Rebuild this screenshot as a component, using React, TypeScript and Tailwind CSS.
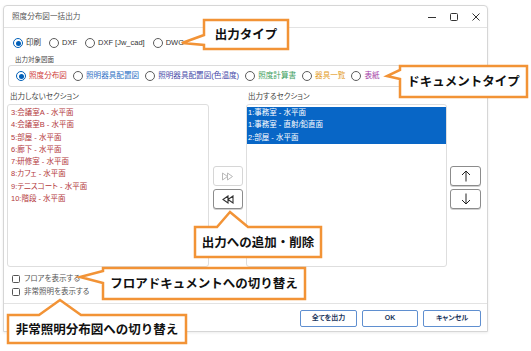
import clsx from "clsx";

type Opt = { label: string; color?: string; checked?: boolean };

const outputTypes: Opt[] = [
    { label: "印刷", checked: true },
    { label: "DXF" },
    { label: "DXF [Jw_cad]" },
    { label: "DWG" },
];

const docTypes: Opt[] = [
    { label: "照度分布図", color: "text-[#cf3b3b]", checked: true },
    { label: "照明器具配置図", color: "text-[#2a6fc4]" },
    { label: "照明器具配置図(色温度)", color: "text-[#4548a8]" },
    { label: "照度計算書", color: "text-[#3c9d5c]" },
    { label: "器具一覧", color: "text-[#e39a22]" },
    { label: "表紙", color: "text-[#a23aa6]" },
];

const notOutput = [
    "3:会議室A - 水平面",
    "4:会議室B - 水平面",
    "5:部屋 - 水平面",
    "6:廊下 - 水平面",
    "7:研修室 - 水平面",
    "8:カフェ - 水平面",
    "9:テニスコート - 水平面",
    "10:階段 - 水平面",
];

const toOutput = ["1:事務室 - 水平面", "1:事務室 - 直射/鉛直面", "2:部屋 - 水平面"];

// callout boxes (text overlay) and their outlines with the tails
const callouts = [
    { text: "出力タイプ", x: 204, y: 20, w: 84, h: 29, d: "M204 20H288V49H204V45L182 43L204 35Z" },
    { text: "ドキュメントタイプ", x: 400, y: 66, w: 127, h: 31, d: "M400 66H527V97H400V79L387 76L400 70Z" },
    { text: "出力への追加・削除", x: 195, y: 227, w: 126, h: 30, d: "M195 227H217L230 212L248 227H321V257H195Z" },
    { text: "フロアドキュメントへの切り替え", x: 103, y: 268, w: 202, h: 31, d: "M103 268H305V299H103V283L80 277L103 271Z" },
    { text: "非常照明分布図への切り替え", x: 8, y: 315, w: 178, h: 28, d: "M8 315H39L60 300L81 315H186V343H8Z" },
];

function Radio({ opt, size }: { opt: Opt; size: string }) {
    return (
        <div className="flex items-center gap-[3px]">
            <span
                className={clsx(
                    "w-[10px] h-[10px] rounded-full flex items-center justify-center bg-white shrink-0",
                    opt.checked ? "border-[1.5px] border-[#005fb8]" : "border border-[#5c5c5c]"
                )}
            >
                {opt.checked && <span className="w-[5px] h-[5px] rounded-full bg-[#005fb8]" />}
            </span>
            <span className={clsx(size, "whitespace-nowrap leading-none", opt.color ?? "text-[#333]")}>
                {opt.label}
            </span>
        </div>
    );
}

function Check({ label }: { label: string }) {
    return (
        <div className="h-[13px] flex items-center gap-[4px] ml-[5px]">
            <span className="w-[8px] h-[8px] rounded-[1.5px] border border-[#555] bg-white" />
            <span className="text-[7.5px] text-[#555] leading-none">{label}</span>
        </div>
    );
}

function SmallButton({ children, disabled }: { children: React.ReactNode; disabled?: boolean }) {
    return (
        <div
            className={clsx(
                "w-[30px] h-[20px] rounded-[3px] bg-white flex items-center justify-center",
                disabled ? "border border-[#d6d6d6]" : "border border-[#8c8c8c] shadow-[0_1px_0_#d0d0d0]"
            )}
        >
            {children}
        </div>
    );
}

function FooterButton({ label, w }: { label: string; w: string }) {
    return (
        <div
            className={clsx(
                w,
                "h-[17px] rounded-[2px] border border-[#5f8fd0] bg-white flex items-center justify-center text-[7px] font-bold text-[#1d3760]"
            )}
        >
            {label}
        </div>
    );
}

export default function App() {
    return (
        <div className="relative w-[531px] h-[351px] overflow-hidden bg-white font-['Liberation_Sans','Noto_Sans_CJK_JP',sans-serif]">
            {/* dialog */}
            <div className="ml-[3px] mt-[5px] w-[485px] h-[327px] border border-[#d6d6d6] rounded-t-[4px] bg-white flex flex-col shadow-[0_1px_3px_rgba(0,0,0,0.08)] [font-feature-settings:'palt']">
                {/* title bar */}
                <div className="h-[22px] border-b border-[#e3e3e3] flex items-center">
                    <span className="pl-[8px] text-[7.6px] text-[#555] flex-1">照度分布図一括出力</span>
                    <div className="w-[22px] h-full flex items-center justify-center">
                        <svg width="10" height="10" viewBox="0 0 10 10">
                            <path d="M1 5.5H9" stroke="#333" strokeWidth="1" />
                        </svg>
                    </div>
                    <div className="w-[22px] h-full flex items-center justify-center">
                        <svg width="10" height="10" viewBox="0 0 10 10">
                            <rect x="1.5" y="1.5" width="7" height="7" rx="1" fill="none" stroke="#333" strokeWidth="1" />
                        </svg>
                    </div>
                    <div className="w-[22px] h-full flex items-center justify-center">
                        <svg width="10" height="10" viewBox="0 0 10 10">
                            <path d="M1.5 1.5L8.5 8.5M8.5 1.5L1.5 8.5" stroke="#333" strokeWidth="1" />
                        </svg>
                    </div>
                </div>

                {/* body */}
                <div className="flex-1 flex flex-col px-[3px]">
                    <div className="mt-[9px] h-[12px] pl-[6px] flex items-center gap-[8px]">
                        {outputTypes.map((o) => (
                            <Radio key={o.label} opt={o} size="text-[7.5px]" />
                        ))}
                    </div>

                    <div className="mt-[6px] h-[9px] pl-[8px] text-[6.5px] text-[#444] leading-[9px]">出力対象図面</div>

                    <div className="mt-[1px] ml-[1px] h-[22px] border border-[#dcdcdc] rounded-[3px] flex items-center pl-[7px] gap-[6px]">
                        {docTypes.map((o) => (
                            <Radio key={o.label} opt={o} size="text-[7.6px]" />
                        ))}
                    </div>

                    <div className="mt-[5px] h-[9px] flex text-[7.5px] text-[#444] leading-[9px]">
                        <span className="w-[239px] pl-[3px]">出力しないセクション</span>
                        <span className="pl-[2px]">出力するセクション</span>
                    </div>

                    <div className="mt-[3px] h-[163px] flex">
                        <div className="w-[202px] h-full border border-[#dedede] rounded-[3px] pt-[2px] pl-[3px]">
                            {notOutput.map((s) => (
                                <div key={s} className="text-[7.5px] leading-[12.3px] text-[#b3383c] whitespace-nowrap">
                                    {s}
                                </div>
                            ))}
                        </div>

                        <div className="w-[37px] flex flex-col items-center pt-[62px] gap-[3px]">
                            <SmallButton disabled>
                                <svg width="14" height="9" viewBox="0 0 14 9">
                                    <path d="M1.5 1L6.5 4.5L1.5 8Z M6.5 1L11.5 4.5L6.5 8Z" fill="none" stroke="#b9b9b9" strokeWidth="1" />
                                </svg>
                            </SmallButton>
                            <SmallButton>
                                <svg width="14" height="9" viewBox="0 0 14 9">
                                    <path d="M7 1L2 4.5L7 8Z M12 1L7 4.5L12 8Z" fill="none" stroke="#333" strokeWidth="1.1" />
                                </svg>
                            </SmallButton>
                        </div>

                        <div className="w-[201px] h-full border border-[#dedede] rounded-[3px] pt-[2px]">
                            {toOutput.map((s) => (
                                <div
                                    key={s}
                                    className="bg-[#0866c6] text-white text-[7.5px] leading-[12.3px] pl-[1px] whitespace-nowrap"
                                >
                                    {s}
                                </div>
                            ))}
                        </div>

                        <div className="w-[37px] flex flex-col items-center pt-[62px] gap-[3px]">
                            <div className="w-[31px] h-[20px] rounded-[3px] border border-[#8c8c8c] bg-white shadow-[0_1px_0_#d0d0d0] flex items-center justify-center">
                                <svg width="10" height="12" viewBox="0 0 10 12">
                                    <path d="M5 11.5V1M1 5L5 1L9 5" fill="none" stroke="#222" strokeWidth="1" />
                                </svg>
                            </div>
                            <div className="w-[31px] h-[20px] rounded-[3px] border border-[#8c8c8c] bg-white shadow-[0_1px_0_#d0d0d0] flex items-center justify-center">
                                <svg width="10" height="12" viewBox="0 0 10 12">
                                    <path d="M5 0.5V11M1 7L5 11L9 7" fill="none" stroke="#222" strokeWidth="1" />
                                </svg>
                            </div>
                        </div>
                    </div>

                    <div className="mt-[5px] flex flex-col">
                        <Check label="フロアを表示する" />
                        <Check label="非常照明を表示する" />
                    </div>
                </div>

                {/* footer */}
                <div className="h-[28px] border-t border-[#e3e3e3] flex items-center justify-end gap-[5px] pr-[6px] pt-[1px]">
                    <FooterButton label="全てを出力" w="w-[57px]" />
                    <FooterButton label="OK" w="w-[56px]" />
                    <FooterButton label="キャンセル" w="w-[58px]" />
                </div>
            </div>

            {/* callouts lying over the dialog */}
            <svg className="absolute inset-0 pointer-events-none" width="531" height="351" viewBox="0 0 531 351">
                {callouts.map((c) => (
                    <path key={c.text} d={c.d} fill="#fff" stroke="#f29336" strokeWidth="2.5" strokeLinejoin="miter" />
                ))}
            </svg>
            {callouts.map((c) => (
                <div
                    key={c.text}
                    className="absolute flex items-center justify-center text-[12.5px] font-bold text-[#111] whitespace-nowrap font-['Noto_Sans_CJK_JP',sans-serif]"
                    style={{ left: c.x, top: c.y, width: c.w, height: c.h }}
                >
                    {c.text}
                </div>
            ))}
        </div>
    );
}
